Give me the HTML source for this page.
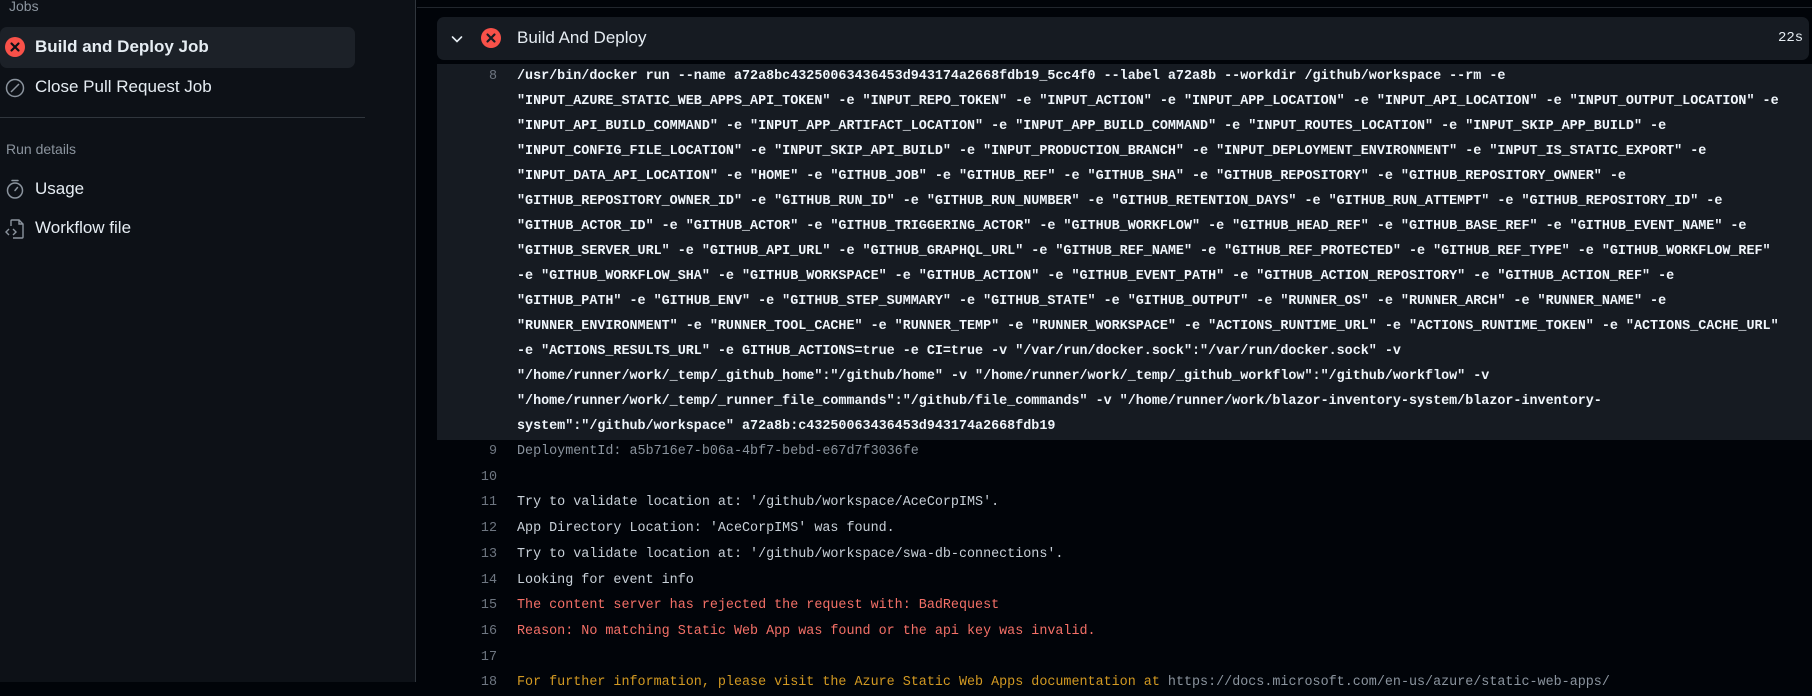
<!DOCTYPE html>
<html><head><meta charset="utf-8"><style>
*{margin:0;padding:0;box-sizing:border-box}
body{width:1812px;height:682px;overflow:hidden;background:#010409;font-family:"Liberation Sans",sans-serif;position:relative}
#side{position:absolute;left:0;top:0;width:416px;height:682px;background:#0d1117;border-right:1px solid #30363d}
.a{position:absolute;white-space:nowrap}
.g{color:#8b949e;font-size:14px}
.it{font-size:17px;color:#e6edf3}
#sel{position:absolute;left:0;top:27px;width:355px;height:41px;background:#1c2128;border-radius:7px}
#hdr{position:absolute;left:437px;top:17px;width:1372px;height:43px;background:#161b22;border-radius:7px}
#hl{position:absolute;left:437px;top:64px;width:1375px;height:376px;background:#161b22}
.log{position:absolute;font-family:"Liberation Mono",monospace;font-size:13.4px;line-height:25.7px;white-space:pre}
.num{left:440px;width:57px;text-align:right;color:#6e7681}
.txt{left:517px}
</style></head><body>
<div id="side">
<div class="a g" style="left:9px;top:-2px">Jobs</div>
<div id="sel"></div>
<svg class="a" style="left:5px;top:37px" width="20" height="20" viewBox="0 0 20 20"><circle cx="10" cy="10" r="10" fill="#f85149"/><path d="M6.5 6.5l7 7M13.5 6.5l-7 7" stroke="#0d1117" stroke-width="2.2" stroke-linecap="round"/></svg>
<div class="a it" style="left:35px;top:37px;font-weight:bold">Build and Deploy Job</div>
<svg class="a" style="left:5px;top:78px" width="20" height="20" viewBox="0 0 20 20"><circle cx="10" cy="10" r="8.5" fill="none" stroke="#8b949e" stroke-width="1.5"/><path d="M6 14L14 6" stroke="#8b949e" stroke-width="1.5"/></svg>
<div class="a it" style="left:35px;top:77px">Close Pull Request Job</div>
<div class="a" style="left:0;top:117px;width:365px;height:1px;background:#30363d"></div>
<div class="a g" style="left:6px;top:141px">Run details</div>
<svg class="a" style="left:5px;top:178px" width="20" height="22" viewBox="0 0 20 22"><circle cx="10" cy="12.5" r="7.5" fill="none" stroke="#8b949e" stroke-width="1.5"/><path d="M7 2.5h6M10 12.5l2.5-3" stroke="#8b949e" stroke-width="1.5" stroke-linecap="round"/></svg>
<div class="a it" style="left:35px;top:179px">Usage</div>
<svg class="a" style="left:4px;top:218px" width="22" height="22" viewBox="0 0 22 22"><path d="M8 2h7l4 4v13a1 1 0 0 1-1 1H9M8 2a1 1 0 0 0-1 1v5M15 2v4h4" fill="none" stroke="#8b949e" stroke-width="1.4"/><path d="M5 11l-3 3 3 3M9 11l3 3-3 3" fill="none" stroke="#8b949e" stroke-width="1.4"/></svg>
<div class="a it" style="left:35px;top:218px">Workflow file</div>
</div>
<div class="a" style="left:417px;top:7px;width:1395px;height:1px;background:#21262d"></div>
<div id="hdr"></div>
<svg class="a" style="left:449px;top:31px" width="16" height="16" viewBox="0 0 16 16"><path d="M3.5 6l4.5 4.5L12.5 6" fill="none" stroke="#e6edf3" stroke-width="1.6" stroke-linecap="round"/></svg>
<svg class="a" style="left:481px;top:28px" width="20" height="20" viewBox="0 0 20 20"><circle cx="10" cy="10" r="10" fill="#f85149"/><path d="M6.5 6.5l7 7M13.5 6.5l-7 7" stroke="#161b22" stroke-width="2.2" stroke-linecap="round"/></svg>
<div class="a" style="left:517px;top:28px;font-size:17px;color:#e6edf3">Build And Deploy</div>
<div class="a" style="left:1778px;top:30px;font-size:14px;color:#e6edf3;font-family:'Liberation Mono',monospace">22s</div>
<div id="hl"></div>
<div class="log num" style="top:64px;line-height:25px">8</div>
<div class="log txt" style="top:64px;line-height:25px;color:#f0f6fc;font-weight:bold">/usr/bin/docker run --name a72a8bc43250063436453d943174a2668fdb19_5cc4f0 --label a72a8b --workdir /github/workspace --rm -e
"INPUT_AZURE_STATIC_WEB_APPS_API_TOKEN" -e "INPUT_REPO_TOKEN" -e "INPUT_ACTION" -e "INPUT_APP_LOCATION" -e "INPUT_API_LOCATION" -e "INPUT_OUTPUT_LOCATION" -e
"INPUT_API_BUILD_COMMAND" -e "INPUT_APP_ARTIFACT_LOCATION" -e "INPUT_APP_BUILD_COMMAND" -e "INPUT_ROUTES_LOCATION" -e "INPUT_SKIP_APP_BUILD" -e
"INPUT_CONFIG_FILE_LOCATION" -e "INPUT_SKIP_API_BUILD" -e "INPUT_PRODUCTION_BRANCH" -e "INPUT_DEPLOYMENT_ENVIRONMENT" -e "INPUT_IS_STATIC_EXPORT" -e
"INPUT_DATA_API_LOCATION" -e "HOME" -e "GITHUB_JOB" -e "GITHUB_REF" -e "GITHUB_SHA" -e "GITHUB_REPOSITORY" -e "GITHUB_REPOSITORY_OWNER" -e
"GITHUB_REPOSITORY_OWNER_ID" -e "GITHUB_RUN_ID" -e "GITHUB_RUN_NUMBER" -e "GITHUB_RETENTION_DAYS" -e "GITHUB_RUN_ATTEMPT" -e "GITHUB_REPOSITORY_ID" -e
"GITHUB_ACTOR_ID" -e "GITHUB_ACTOR" -e "GITHUB_TRIGGERING_ACTOR" -e "GITHUB_WORKFLOW" -e "GITHUB_HEAD_REF" -e "GITHUB_BASE_REF" -e "GITHUB_EVENT_NAME" -e
"GITHUB_SERVER_URL" -e "GITHUB_API_URL" -e "GITHUB_GRAPHQL_URL" -e "GITHUB_REF_NAME" -e "GITHUB_REF_PROTECTED" -e "GITHUB_REF_TYPE" -e "GITHUB_WORKFLOW_REF"
-e "GITHUB_WORKFLOW_SHA" -e "GITHUB_WORKSPACE" -e "GITHUB_ACTION" -e "GITHUB_EVENT_PATH" -e "GITHUB_ACTION_REPOSITORY" -e "GITHUB_ACTION_REF" -e
"GITHUB_PATH" -e "GITHUB_ENV" -e "GITHUB_STEP_SUMMARY" -e "GITHUB_STATE" -e "GITHUB_OUTPUT" -e "RUNNER_OS" -e "RUNNER_ARCH" -e "RUNNER_NAME" -e
"RUNNER_ENVIRONMENT" -e "RUNNER_TOOL_CACHE" -e "RUNNER_TEMP" -e "RUNNER_WORKSPACE" -e "ACTIONS_RUNTIME_URL" -e "ACTIONS_RUNTIME_TOKEN" -e "ACTIONS_CACHE_URL"
-e "ACTIONS_RESULTS_URL" -e GITHUB_ACTIONS=true -e CI=true -v "/var/run/docker.sock":"/var/run/docker.sock" -v
"/home/runner/work/_temp/_github_home":"/github/home" -v "/home/runner/work/_temp/_github_workflow":"/github/workflow" -v
"/home/runner/work/_temp/_runner_file_commands":"/github/file_commands" -v "/home/runner/work/blazor-inventory-system/blazor-inventory-
system":"/github/workspace" a72a8b:c43250063436453d943174a2668fdb19</div>
<div class="log num" style="top:439px">9
10
11
12
13
14
15
16
17
18</div>
<div class="log txt" style="top:439px;color:#c9d1d9"><span style="color:#8b949e">DeploymentId: a5b716e7-b06a-4bf7-bebd-e67d7f3036fe</span>

Try to validate location at: '/github/workspace/AceCorpIMS'.
App Directory Location: 'AceCorpIMS' was found.
Try to validate location at: '/github/workspace/swa-db-connections'.
Looking for event info
<span style="color:#f47067">The content server has rejected the request with: BadRequest</span>
<span style="color:#f47067">Reason: No matching Static Web App was found or the api key was invalid.</span>

<span style="color:#d29922">For further information, please visit the Azure Static Web Apps documentation at </span><span style="color:#8b949e">https://docs.microsoft.com/en-us/azure/static-web-apps/</span></div>
</body></html>
